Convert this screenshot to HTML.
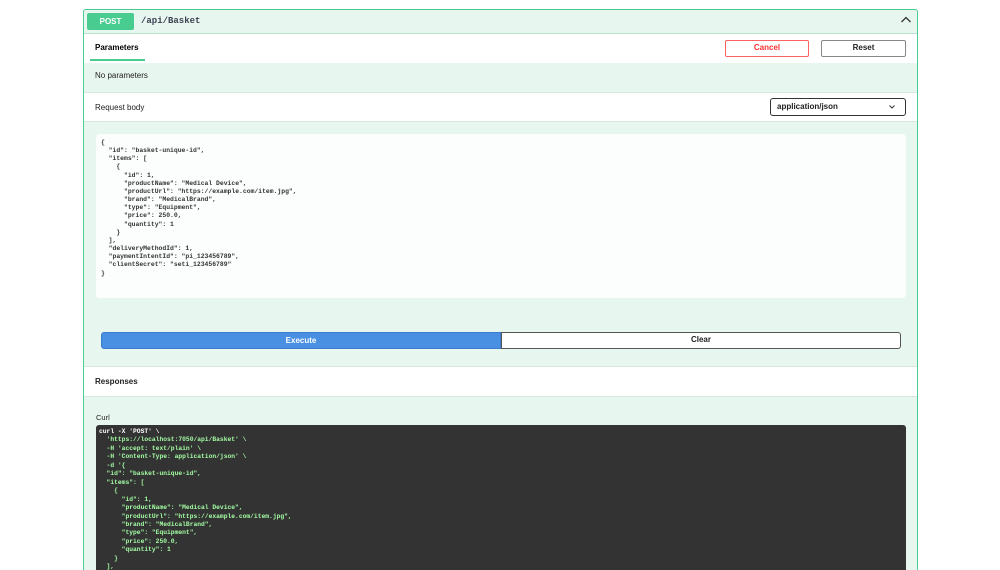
<!DOCTYPE html>
<html><head><meta charset="utf-8"><style>
*{margin:0;padding:0;box-sizing:border-box}
html,body{width:1000px;height:570px;overflow:hidden}
body{background:#fff;font-family:"Liberation Sans",sans-serif;position:relative}
.box{position:absolute;left:83px;top:9px;width:835px;height:561px;border:1px solid #49cc90;border-bottom:none;border-radius:3px 3px 0 0;background:#e8f6f0;overflow:hidden}
.a{position:absolute}
.white{position:absolute;left:0;width:833px;background:#fff;border-top:1px solid #d5e9df}
.t{font-size:8px;color:#3b4151;position:absolute}
pre{font-family:"Liberation Mono",monospace;font-weight:bold;white-space:pre}
</style></head><body>
<div class="box">
  <div class="a" style="left:3px;top:3px;width:47px;height:17px;background:#49cc90;border-radius:2px;color:#fff;font-size:8px;font-weight:bold;text-align:center;line-height:17px">POST</div>
  <div class="a" style="left:57px;top:6px;font-family:'Liberation Mono',monospace;font-size:9px;font-weight:bold;color:#3b4151">/api/Basket</div>
  <svg class="a" style="left:816px;top:5px" width="12" height="10" viewBox="0 0 12 10"><path d="M1.5 7 L6 2.5 L10.5 7" fill="none" stroke="#333" stroke-width="1.3"/></svg>

  <div class="white" style="top:23px;height:30px;border-top:1px solid #b8e3cf">
    <div class="t" style="left:11px;top:9px;font-weight:bold;color:#000">Parameters</div>
    <div class="a" style="left:6px;top:25px;width:55px;height:2px;background:#49cc90"></div>
    <div class="a" style="left:641px;top:6px;width:84px;height:17px;border:1.5px solid #ff6060;border-radius:2px;color:#ff3030;font-size:8px;font-weight:bold;text-align:center;line-height:14px">Cancel</div>
    <div class="a" style="left:737px;top:6px;width:85px;height:17px;border:1.5px solid #888;border-radius:2px;color:#222;font-size:8px;font-weight:bold;text-align:center;line-height:14px">Reset</div>
  </div>
  <div class="t" style="left:11px;top:61px;color:#222">No parameters</div>
  <div class="white" style="top:82px;height:30px;border-bottom:1px solid #d5e9df">
    <div class="t" style="left:11px;top:10px;color:#222">Request body</div>
    <div class="a" style="left:686px;top:5px;width:136px;height:18px;border:1.3px solid #333;border-radius:3px;font-size:8px;font-weight:bold;color:#222;padding-left:6px;line-height:15px">application/json<svg style="position:absolute;right:10px;top:6px" width="6" height="4" viewBox="0 0 6 4"><path d="M0.5 0.5 L3 3 L5.5 0.5" fill="none" stroke="#333" stroke-width="1"/></svg></div>
  </div>
  <div class="a" style="left:12px;top:124px;width:810px;height:164px;background:#fbfefc;border-radius:3px">
<pre style="position:absolute;left:5px;top:5px;font-size:6.4px;line-height:8.15px;color:#333">{
  "id": "basket-unique-id",
  "items": [
    {
      "id": 1,
      "productName": "Medical Device",
      "productUrl": "https://example.com/item.jpg",
      "brand": "MedicalBrand",
      "type": "Equipment",
      "price": 250.0,
      "quantity": 1
    }
  ],
  "deliveryMethodId": 1,
  "paymentIntentId": "pi_123456789",
  "clientSecret": "seti_123456789"
}</pre>
  </div>
  <div class="a" style="left:17px;top:322px;width:400px;height:17px;background:#4990e2;border:1px solid #3d7ccc;border-radius:3px 0 0 3px;color:#fff;font-size:8px;font-weight:bold;text-align:center;line-height:15px">Execute</div>
  <div class="a" style="left:417px;top:322px;width:400px;height:17px;background:#fff;border:1.3px solid #555;border-radius:0 3px 3px 0;color:#222;font-size:8px;font-weight:bold;text-align:center;line-height:14px">Clear</div>
  <div class="white" style="top:356px;height:31px;border-bottom:1px solid #d5e9df">
    <div class="t" style="left:11px;top:10px;font-weight:bold;color:#222">Responses</div>
  </div>
  <div class="t" style="left:12px;top:403px;color:#222;font-size:7.5px">Curl</div>
  <div class="a" style="left:12px;top:415px;width:810px;height:150px;background:#333;border-radius:3px 3px 0 0">
<pre style="position:absolute;left:3px;top:3px;font-size:6.3px;line-height:8.45px;color:#a2fca2"><span style="color:#fff">curl -X 'POST' \</span>
  'https://localhost:7050/api/Basket' \
  -H 'accept: text/plain' \
  -H 'Content-Type: application/json' \
  -d '{
  "id": "basket-unique-id",
  "items": [
    {
      "id": 1,
      "productName": "Medical Device",
      "productUrl": "https://example.com/item.jpg",
      "brand": "MedicalBrand",
      "type": "Equipment",
      "price": 250.0,
      "quantity": 1
    }
  ],</pre>
  </div>
</div>
</body></html>
